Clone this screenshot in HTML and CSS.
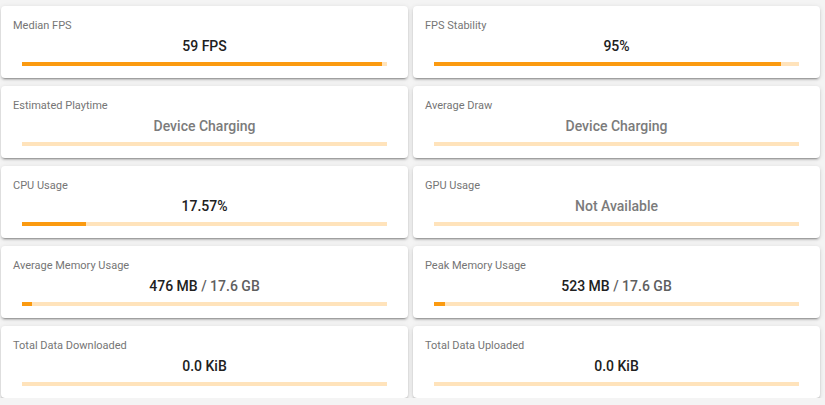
FILE: index.html
```html
<!DOCTYPE html>
<html lang="en">
<head>
  <meta charset="UTF-8" />
  <meta name="viewport" content="width=device-width, initial-scale=1.0"/>
  <title>Session Stats</title>
  <link rel="stylesheet" href="styles.css">
</head>
<body>

  <div class="stats">
    <div class="card">
      <div class="label">Median FPS</div>
      <div class="value">59 FPS</div>
      <div class="bar"><div class="fill" style="width: 98.5%"></div></div>
    </div>

    <div class="card">
      <div class="label">FPS Stability</div>
      <div class="value">95%</div>
      <div class="bar"><div class="fill" style="width: 95%"></div></div>
    </div>

    <div class="card">
      <div class="label">Estimated Playtime</div>
      <div class="value muted">Device Charging</div>
      <div class="bar"></div>
    </div>

    <div class="card">
      <div class="label">Average Draw</div>
      <div class="value muted">Device Charging</div>
      <div class="bar"></div>
    </div>

    <div class="card">
      <div class="label">CPU Usage</div>
      <div class="value">17.57%</div>
      <div class="bar"><div class="fill" style="width: 17.57%"></div></div>
    </div>

    <div class="card">
      <div class="label">GPU Usage</div>
      <div class="value muted">Not Available</div>
      <div class="bar"></div>
    </div>

    <div class="card">
      <div class="label">Average Memory Usage</div>
      <div class="value">476 MB <span class="total">/ 17.6 GB</span></div>
      <div class="bar"><div class="fill" style="width: 2.7%"></div></div>
    </div>

    <div class="card">
      <div class="label">Peak Memory Usage</div>
      <div class="value">523 MB <span class="total">/ 17.6 GB</span></div>
      <div class="bar"><div class="fill" style="width: 3%"></div></div>
    </div>

    <div class="card">
      <div class="label">Total Data Downloaded</div>
      <div class="value">0.0 KiB</div>
      <div class="bar"></div>
    </div>

    <div class="card">
      <div class="label">Total Data Uploaded</div>
      <div class="value">0.0 KiB</div>
      <div class="bar"></div>
    </div>
  </div>

</body>
</html>
```

FILE: styles.css
```css
:root {
  --bg: #f4f4f4;
  --card-bg: #fff;
  --text: #212121;
  --muted: #7b7b7b;
  --label: #757575;
  --accent: #fb9a10;
  --track: #ffe3bb;
}

* {
  box-sizing: border-box;
}

body {
  margin: 0;
  font-family: Roboto, 'Liberation Sans', sans-serif;
  background-color: var(--bg);
  color: var(--text);
}

.stats {
  display: grid;
  grid-template-columns: 407px 407px;
  column-gap: 5px;
  row-gap: 8px;
  padding: 6px 0 0 1px;
}

.card {
  background: var(--card-bg);
  border-radius: 4px;
  padding: 12px 12px 12px;
  height: 72px;
  box-shadow: 0 3px 1px -2px rgba(0,0,0,0.2), 0 2px 2px 0 rgba(0,0,0,0.14), 0 1px 5px 0 rgba(0,0,0,0.12);
}

.label {
  font-size: 11px;
  line-height: 16px;
  color: var(--label);
}

.value {
  margin-top: 2px;
  font-size: 14px;
  line-height: 20px;
  font-weight: 500;
  text-align: center;
}

.value.muted {
  color: var(--muted);
}

.total {
  color: #5f5f5f;
}

.bar {
  margin: 6px 9px 0;
  height: 4px;
  background: var(--track);
}

.fill {
  height: 100%;
  background: var(--accent);
}
```
